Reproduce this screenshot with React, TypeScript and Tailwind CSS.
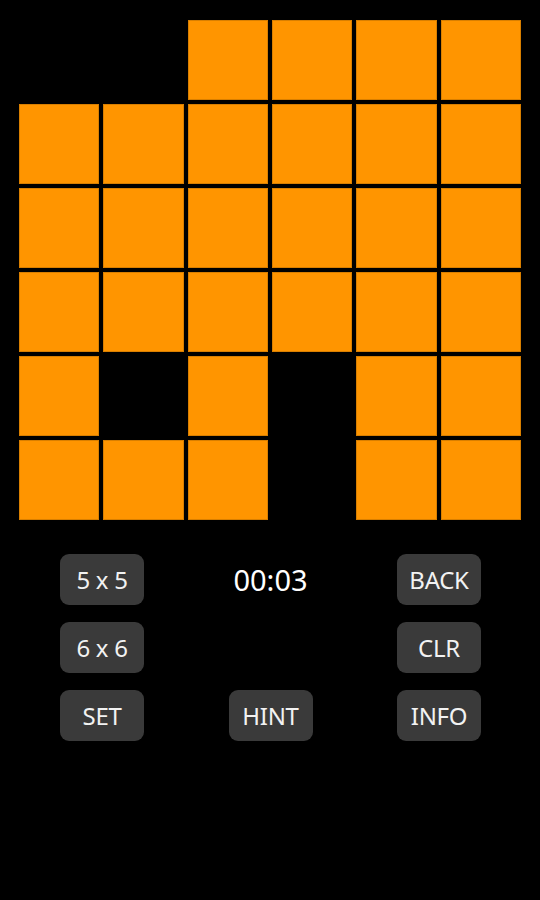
const board = [
  [0, 0, 1, 1, 1, 1],
  [1, 1, 1, 1, 1, 1],
  [1, 1, 1, 1, 1, 1],
  [1, 1, 1, 1, 1, 1],
  [1, 0, 1, 0, 1, 1],
  [1, 1, 1, 0, 1, 1],
]

function Btn({ label }: { label: string }) {
  return (
    <button className="w-[84px] h-[51px] rounded-[9px] bg-[#3a3a3a] text-[#f2f2f2] text-[24px] leading-none tracking-[-0.3px]">
      {label}
    </button>
  )
}

export default function App() {
  return (
    <div className="w-[540px] h-[900px] bg-black" style={{ fontFamily: '"Noto Sans", sans-serif' }}>
      <div className="pt-[20px] pl-[19px]">
        <div className="grid grid-cols-6 gap-[4px] w-[502px]">
          {board.flat().map((v, i) => (
            <div
              key={i}
              className={
                v ? 'h-[80px] bg-[#ff9500] border border-[#d97f00]' : 'h-[80px]'
              }
            />
          ))}
        </div>
      </div>
      <div className="mt-[34px] mx-[60px] w-[421px] flex flex-col gap-[17px]">
        <div className="flex justify-between items-center">
          <Btn label="5 x 5" />
          <div className="w-[84px] text-center text-white text-[29px] leading-none">00:03</div>
          <Btn label="BACK" />
        </div>
        <div className="flex justify-between items-center">
          <Btn label="6 x 6" />
          <div className="w-[84px]" />
          <Btn label="CLR" />
        </div>
        <div className="flex justify-between items-center">
          <Btn label="SET" />
          <Btn label="HINT" />
          <Btn label="INFO" />
        </div>
      </div>
    </div>
  )
}
